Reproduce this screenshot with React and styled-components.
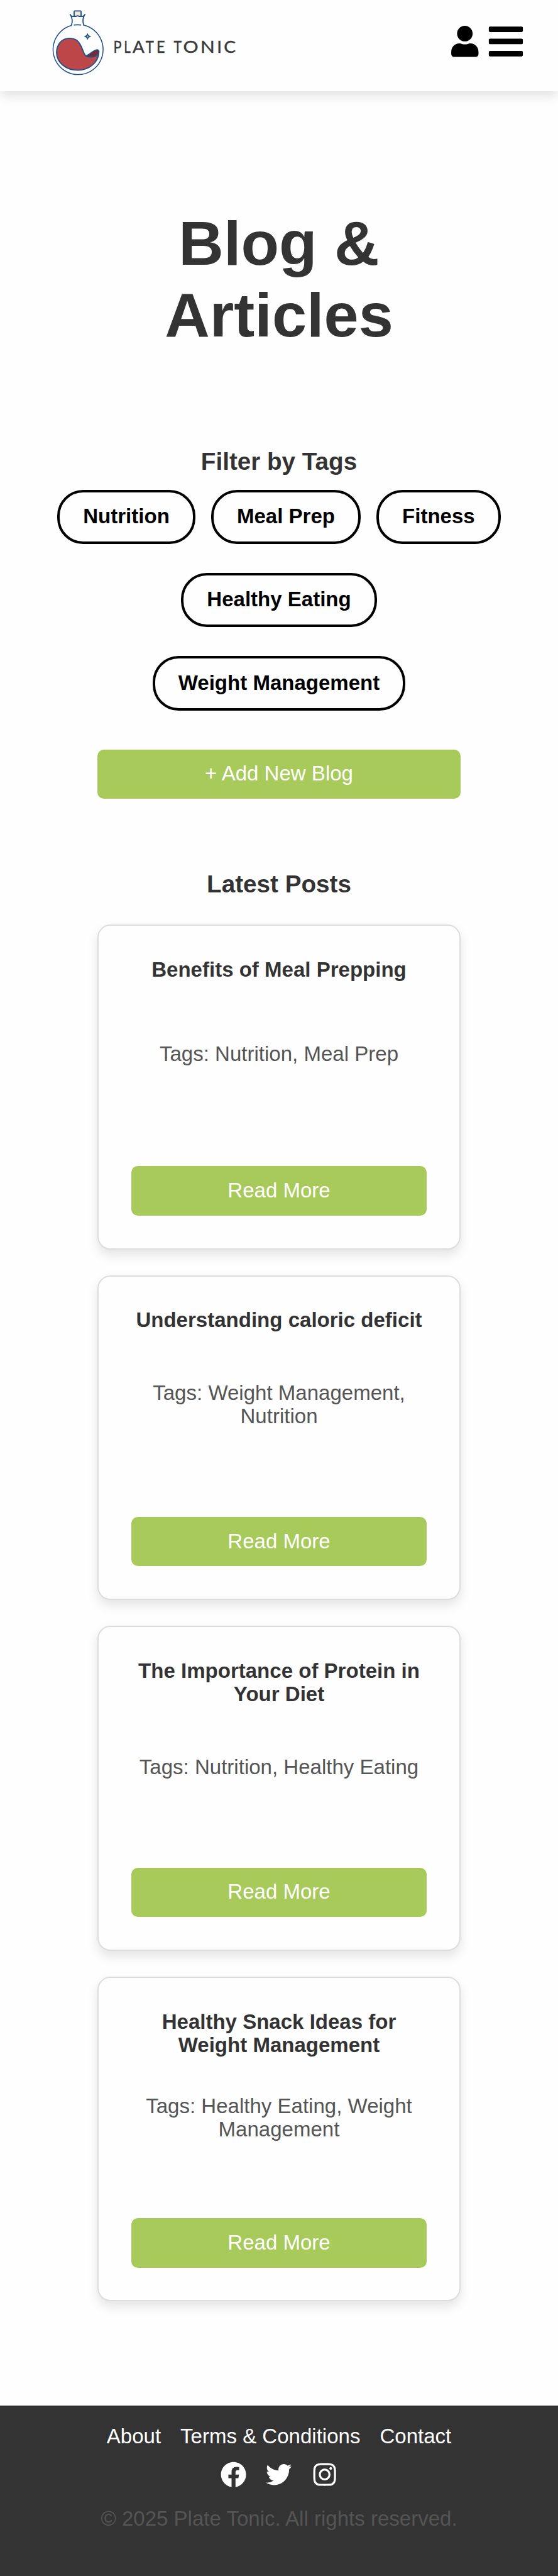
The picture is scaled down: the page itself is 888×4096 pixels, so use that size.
import React from "react";
import styled, { createGlobalStyle } from "styled-components";
import { FaUser, FaBars, FaFacebook, FaTwitter, FaInstagram } from "react-icons/fa";

// Design units: the layout is drawn on a 430-unit wide mobile grid.
const u = (n) => `${((n * 888) / 430).toFixed(3)}px`;

const colors = {
  page: "#fefefe",
  ink: "#333333",
  muted: "#555555",
  green: "#a7ca5a",
  line: "#dddddd",
  navy: "#1f4f91",
};

const GlobalStyle = createGlobalStyle`
  *, *::before, *::after { box-sizing: border-box; }
  body {
    margin: 0;
    background: ${colors.page};
    color: ${colors.ink};
    font-family: Arial, "Liberation Sans", sans-serif;
    font-size: ${u(16)};
    line-height: ${u(18)};
  }
  h1, h2, h3, p { margin: 0; }
  button { font: inherit; cursor: pointer; }
`;

const Page = styled.div`
  display: flex;
  flex-direction: column;
  height: 4096px;
  overflow: hidden;
`;

const Header = styled.header`
  display: flex;
  flex: none;
  justify-content: space-between;
  align-items: flex-start;
  height: ${u(70)};
  padding: ${u(5)} ${u(25)} 0 ${u(36.67)};
  background: ${colors.page};
  box-shadow: 0 ${u(4)} ${u(8)} rgba(0, 0, 0, 0.1);
`;

const LogoSvg = styled.svg`
  display: block;
  width: ${u(150)};
  height: ${u(56.67)};
`;

const HeaderActions = styled.div`
  display: flex;
  align-items: center;
  gap: ${u(5)};
  padding-top: ${u(12)};
  color: #000;

  svg { display: block; }
`;

const UserIcon = styled(FaUser)`
  width: ${u(24)};
  height: ${u(24)};
`;

const MenuIcon = styled(FaBars)`
  width: ${u(30)};
  height: ${u(30)};
`;

const Main = styled.main`
  display: flex;
  flex: 1;
  flex-direction: column;
  align-items: center;
  padding-top: ${u(90)};
  text-align: center;
`;

const Title = styled.h1`
  width: ${u(280)};
  font-size: ${u(48)};
  line-height: ${u(55)};
`;

const SectionTitle = styled.h2`
  margin-top: ${({ $top }) => u($top)};
  font-size: ${u(18.72)};
  line-height: ${u(22)};
`;

const TagList = styled.div`
  display: flex;
  flex-wrap: wrap;
  justify-content: center;
  gap: ${u(22)} ${u(12)};
  width: ${u(350)};
  margin-top: ${u(10.5)};
`;

const TagButton = styled.button`
  height: ${u(42)};
  padding: ${u(9.5)} ${u(18)} ${u(10.5)};
  border: ${u(2)} solid #000;
  border-radius: ${u(20)};
  background: transparent;
  color: #000;
  font-weight: bold;
  white-space: nowrap;
`;

const GreenButton = styled.button`
  width: ${({ $width }) => u($width)};
  height: ${u(38)};
  margin-top: ${({ $top = 0 }) => u($top)};
  padding: ${u(9.5)} 0 ${u(10.5)};
  border: 0;
  border-radius: ${u(5)};
  background: ${colors.green};
  color: #fff;
`;

const PostList = styled.div`
  display: flex;
  flex-direction: column;
  gap: ${u(20)};
  margin-top: ${u(20.5)};
`;

const Card = styled.article`
  display: flex;
  flex-direction: column;
  align-items: center;
  justify-content: space-between;
  width: ${u(280)};
  height: ${u(250)};
  padding: ${u(24.5)} ${u(25)} ${u(25)};
  border: ${u(1)} solid ${colors.line};
  border-radius: ${u(10)};
  background: ${colors.page};
  box-shadow: 0 ${u(4)} ${u(8)} rgba(0, 0, 0, 0.1);
`;

const CardTitle = styled.h3`
  font-size: ${u(16)};
`;

const CardTags = styled.p`
  margin-bottom: ${u(30.5)};
  color: ${colors.muted};
`;

const Footer = styled.footer`
  display: flex;
  flex: none;
  flex-direction: column;
  align-items: center;
  height: ${u(131)};
  padding-top: ${u(14.5)};
  background: ${colors.ink};
`;

const FooterRow = styled.div`
  display: flex;
  gap: ${u(15)};
  margin-bottom: ${({ $bottom }) => u($bottom)};
  color: #fff;

  svg {
    display: block;
    width: ${u(20)};
    height: ${u(20)};
  }
`;

const FooterLink = styled.a`
  color: #fff;
`;

const Copyright = styled.p`
  color: ${colors.muted};
`;

// Each letter: glyph, left edge, drawn advance.
const letters = [
  ["P", 455, 57],
  ["L", 528, 46],
  ["A", 588, 82],
  ["T", 679, 57],
  ["E", 754, 59],
  [" ", 820, 20],
  ["T", 874, 55],
  ["O", 939, 105],
  ["N", 1059, 99],
  ["I", 1173, 34],
  ["C", 1221, 82],
];

const Logo = () => (
  <LogoSvg viewBox="0 0 1350 510" role="img" aria-label="Plate Tonic">
    <g fill="none" stroke={colors.navy} strokeWidth="6.5" strokeLinecap="round" strokeLinejoin="round">
      <path d="M163 133A173.500 173.500 0 1 0 250 131" />
      <path d="M183 69V36Q183 32 187 32H227Q231 32 231 36V69Z" fill="#f1e6cc" strokeWidth="8" />
      <path
        d="M155 56C160 67 175 72 189 70C198 71 200 66 207 66C214 66 216 71 224 70C240 72 253 68 258 56C242 80 242 110 250 131C236 127 178 127 163 133C172 112 172 82 155 56Z"
        fill={colors.page}
        stroke="none"
      />
      <path
        d="M155 56C160 67 175 72 189 70C198 71 200 66 207 66C214 66 216 71 224 70C240 72 253 68 258 56C242 80 242 110 250 131M155 56C172 82 172 112 163 133"
        strokeWidth="7.500"
      />
      <path d="M184 130Q207 126 229 130" strokeWidth="7" />
      <path
        d="M61 318C62 268 95 222 150 222C195 222 215 240 235 285C248 314 252 335 265 344C285 353 340 355 354 322C350 390 285 443 210 443C125 443 61 390 61 318Z"
        fill="#bb4749"
        strokeWidth="8"
      />
      <path
        d="M265 344C290 335 315 306 338 302C351 300 357 309 354 321C345 350 300 356 265 344Z"
        fill="#7b2b30"
        strokeWidth="8"
      />
      <path
        d="M276 190Q279 205 297 209Q279 213 276 228Q273 213 255 209Q273 205 276 190Z"
        fill={colors.navy}
        strokeWidth="5"
      />
      <path d="M276 201L283 209L276 217L269 209Z" fill="#a7ca5a" stroke="none" />
    </g>
    <text
      y="322"
      fontFamily="Lato, sans-serif"
      fontSize="121"
      fill="#3a3a3a"
      stroke="#3a3a3a"
      strokeWidth="2"
      xmlSpace="preserve"
    >
      {letters.map(([glyph, x, w], i) => (
        <tspan key={i} x={x} textLength={w} lengthAdjust="spacingAndGlyphs">
          {glyph}
        </tspan>
      ))}
    </text>
  </LogoSvg>
);

const tags = ["Nutrition", "Meal Prep", "Fitness", "Healthy Eating", "Weight Management"];

const posts = [
  { title: "Benefits of Meal Prepping", tags: ["Nutrition", "Meal Prep"] },
  { title: "Understanding caloric deficit", tags: ["Weight Management", "Nutrition"] },
  { title: "The Importance of Protein in Your Diet", tags: ["Nutrition", "Healthy Eating"] },
  { title: "Healthy Snack Ideas for Weight Management", tags: ["Healthy Eating", "Weight Management"] },
];

export default function App() {
  return (
    <Page>
      <GlobalStyle />
      <Header>
        <Logo />
        <HeaderActions>
          <UserIcon />
          <MenuIcon />
        </HeaderActions>
      </Header>
      <Main>
        <Title>Blog &amp; Articles</Title>
        <SectionTitle $top={74.5}>Filter by Tags</SectionTitle>
        <TagList>
          {tags.map((tag) => (
            <TagButton key={tag}>{tag}</TagButton>
          ))}
        </TagList>
        <GreenButton $width={280} $top={30}>+ Add New Blog</GreenButton>
        <SectionTitle $top={54.5}>Latest Posts</SectionTitle>
        <PostList>
          {posts.map((post) => (
            <Card key={post.title}>
              <CardTitle>{post.title}</CardTitle>
              <CardTags>Tags: {post.tags.join(", ")}</CardTags>
              <GreenButton $width={228}>Read More</GreenButton>
            </Card>
          ))}
        </PostList>
      </Main>
      <Footer>
        <FooterRow $bottom={10.5}>
          <FooterLink>About</FooterLink>
          <FooterLink>Terms &amp; Conditions</FooterLink>
          <FooterLink>Contact</FooterLink>
        </FooterRow>
        <FooterRow $bottom={14.5}>
          <FaFacebook />
          <FaTwitter />
          <FaInstagram />
        </FooterRow>
        <Copyright>© 2025 Plate Tonic. All rights reserved.</Copyright>
      </Footer>
    </Page>
  );
}
